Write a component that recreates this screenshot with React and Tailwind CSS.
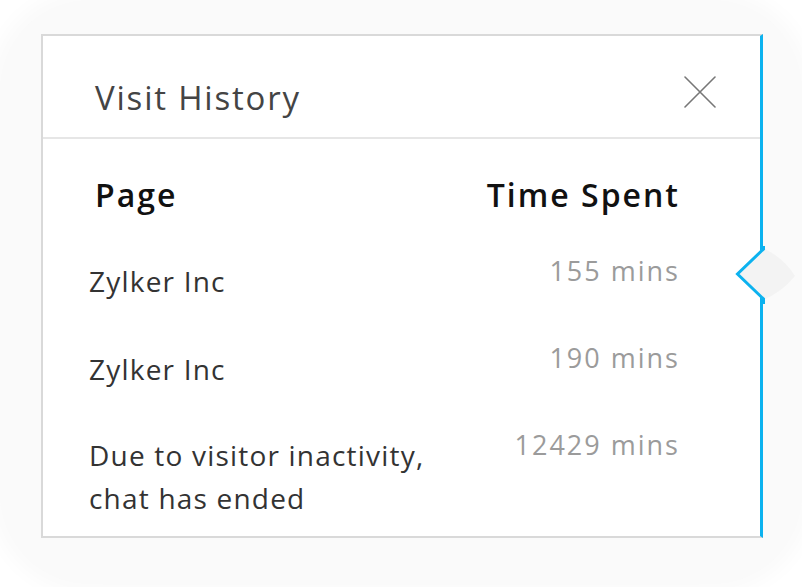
const rows = [
  { page: "Zylker Inc", time: "155 mins", offset: "mt-[3px]" },
  { page: "Zylker Inc", time: "190 mins", offset: "mt-[4px]" },
  { page: "Due to visitor inactivity,\nchat has ended", time: "12429 mins", offset: "mt-[3px]" },
];

function CloseIcon() {
  return (
    <svg width="32" height="32" viewBox="0 0 32 32" className="shrink-0">
      <path d="M1 1 L31 31 M31 1 L1 31" stroke="#777" strokeWidth="1.6" strokeLinecap="round" />
    </svg>
  );
}

function Notch() {
  return (
    <svg
      width="66"
      height="58"
      viewBox="0 0 66 58"
      className="absolute left-[691px] top-[210px]"
    >
      <path d="M29 2 L3 28 L29 54 Q48 46 61 30 Q50 12 29 2 Z" fill="#f3f3f3" />
      <path d="M29.5 0 L29.5 3 L3.5 28 L29.5 53 L29.5 58" fill="none" stroke="#0cb2ef" strokeWidth="3" />
    </svg>
  );
}

export default function App() {
  return (
    <div className="w-[802px] h-[587px] bg-white overflow-hidden font-['Open_Sans',sans-serif]">
      <div className="h-[584px] rounded-[90px] bg-[#fafafa] shadow-[0_0_20px_10px_#fafafa] pt-[34px] pl-[41px]">
        <div className="relative w-[722px] h-[504px] bg-white border-l-2 border-t-2 border-b-2 border-[#d9d9d9] border-r-[3px] border-r-[#0cb2ef]">
          <div className="h-[103px] flex items-start justify-between pl-[52px] pr-[44px] border-b-2 border-[#e6e6e6]">
            <h1 className="mt-[45px] text-[33px] leading-none font-medium tracking-[1.8px] text-[#444]">Visit History</h1>
            <div className="mt-[40px]">
              <CloseIcon />
            </div>
          </div>
          <div className="flex justify-between pl-[52px] pr-[80px] mt-[40px] text-[32px] leading-none font-semibold tracking-[2px] text-[#111]">
            <span>Page</span>
            <span>Time Spent</span>
          </div>
          <div className="mt-[46px] pl-[46px] pr-[80px]">
            {rows.map((r, i) => (
              <div key={i} className="h-[87px] flex justify-between items-start">
                <div className={`${r.offset} text-[28px] leading-[43px] tracking-[1.2px] text-[#333] whitespace-pre-line`}>{r.page}</div>
                <div className="text-[27px] leading-none tracking-[2px] text-[#9b9b9b]">{r.time}</div>
              </div>
            ))}
          </div>
          <Notch />
        </div>
      </div>
    </div>
  );
}
